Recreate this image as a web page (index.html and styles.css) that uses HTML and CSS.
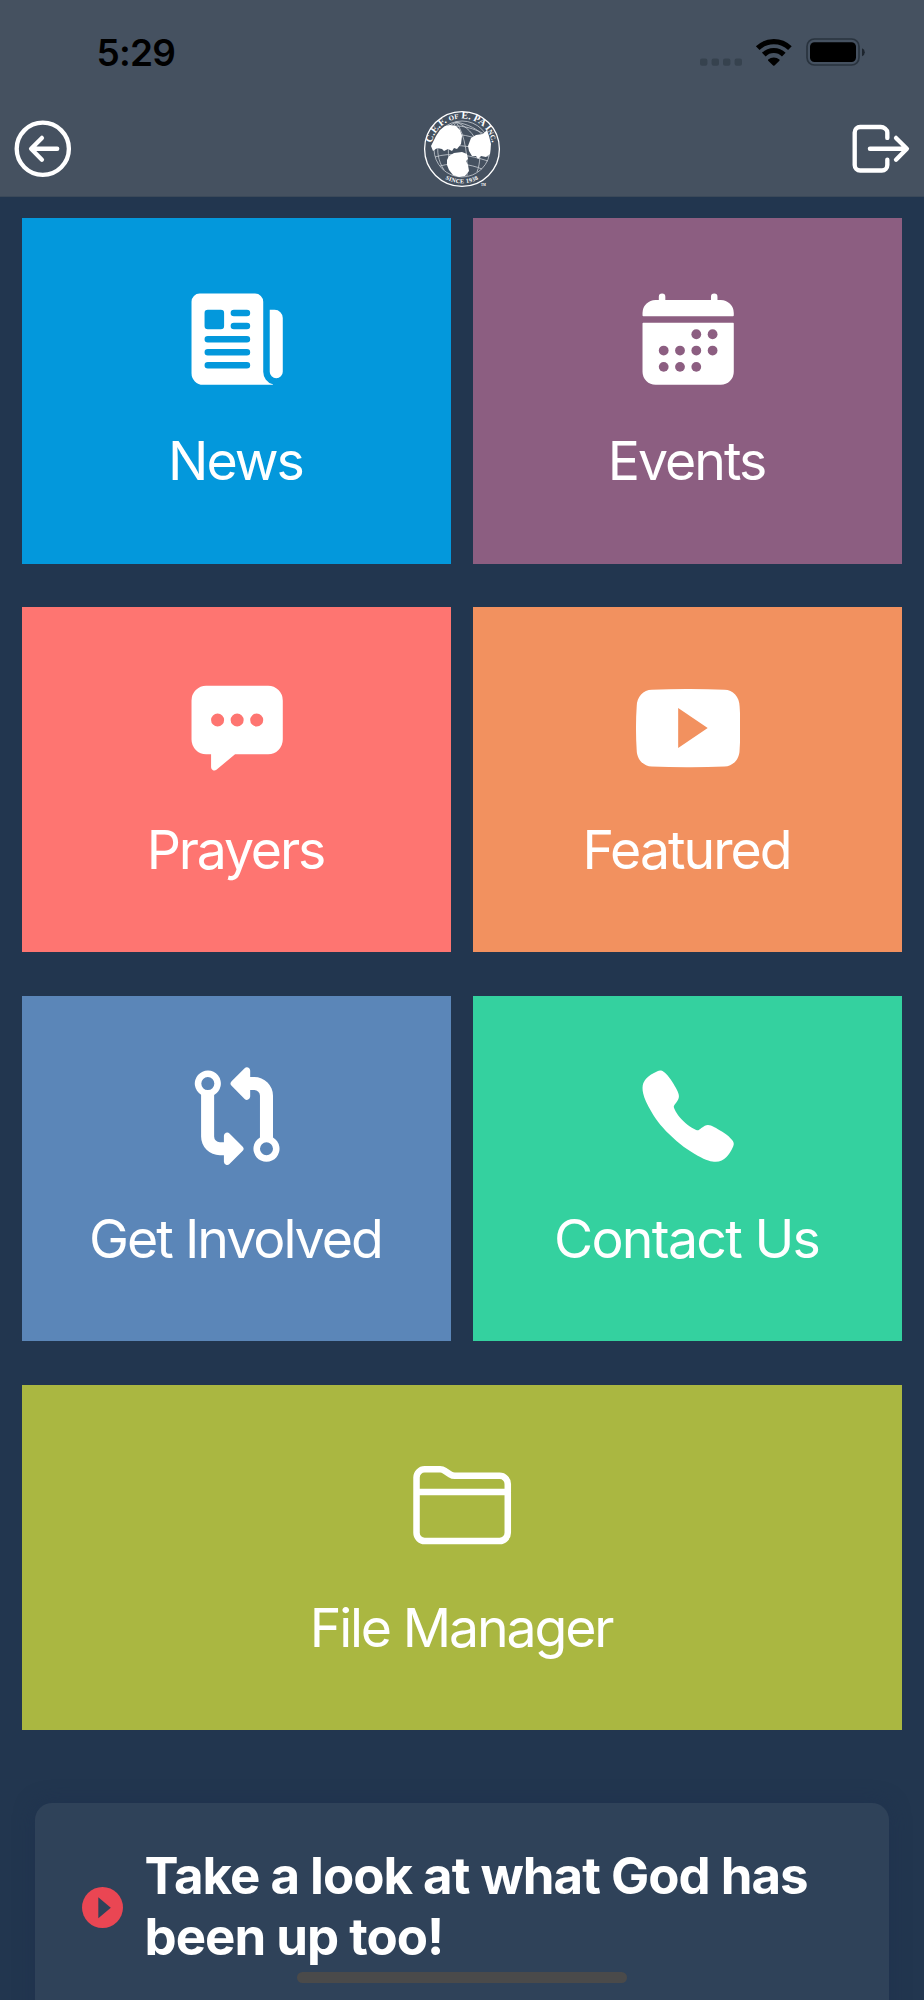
FILE: index.html
```html
<!DOCTYPE html>
<html lang="en">
<head>
<meta charset="utf-8">
<title>Home</title>
<link rel="stylesheet" href="styles.css">
</head>
<body>
<div class="screen">
  <header class="header">
    <div class="status">
      <span class="time">5:29</span>
      <svg class="status-icons" width="164" height="30" viewBox="0 0 164 30">
        <g fill="#36424e"><rect x="0" y="21.4" width="7.4" height="7.4" rx="2"/><rect x="11.6" y="21.4" width="7.4" height="7.4" rx="2"/><rect x="23" y="21.4" width="7.4" height="7.4" rx="2"/><rect x="34.6" y="21.4" width="7.4" height="7.4" rx="2"/></g>
        <g fill="none" stroke="#000" stroke-width="5.2">
          <path d="M57.7 11.2a23 23 0 0 1 32.2 0"/>
          <path d="M63.8 17.6a14.2 14.2 0 0 1 20 0"/>
        </g>
        <path d="M68.2 22.6a8.2 8.2 0 0 1 11.2 0q.5.6 0 1.200l-4.900 4.700q-.7.600-1.400 0l-4.900-4.700q-.5-.6 0-1.200z"/>
        <rect x="107" y="2" width="52" height="26" rx="7.500" fill="none" stroke="#29333e" stroke-width="1.700"/>
        <rect x="110" y="5.300" width="46" height="19.700" rx="4.500"/>
        <path d="M162 11.200q2.800 1.200 2.800 4t-2.800 4z" fill="#1d252e"/>
      </svg>
    </div>
    <nav class="nav">
      <svg class="nav-icon" viewBox="0 0 512 512"><path d="M448 256c0-106-86-192-192-192S64 150 64 256s86 192 192 192 192-86 192-192z"/><path d="M249.400 336L170 256l79.400-80M181 256h181"/></svg>
      <svg class="logo" width="80" height="80" viewBox="-40 -40 80 80">
        <defs>
          <path id="logo-top" d="M-27.500 14A30.800 30.800 0 1 1 27.500 14"/>
          <path id="logo-bottom" d="M-25 23.500A34.300 34.300 0 0 0 25 23.500"/>
        </defs>
        <circle r="37.400" fill="none" stroke="#fff" stroke-width="1.300"/>
        <g fill="none" stroke="#c9ced4" stroke-width=".8">
          <circle r="28"/>
          <path d="M-6-27C-24-18-30 2-18 21M-6-27C-16-10-16 12-7 27M-6-27C4-14 6 12 5 27M-6-27C16-18 22 4 15 23M-6-27C20-22 29-8 26 8M-19-20C-6-26 10-22 24-14M-25-11C-10-18 10-14 27-5M-28 0C-12-6 10-4 28 4M-27 8C-12 3 8 6 26 12M-22 17C-8 13 8 15 20 20"/>
        </g>
        <g fill="#fff">
          <path d="M-26-13l4-6 5-4 5-1 6 1 4 4 2 6-1 8-4 5-3-1-2 3-4-2-4 2-2-2-5-1-4 3-2-5z"/>
          <path d="M9-11l5-3 7-1 4-4 2 6 2 8-1 10-4 3-5-1-3 3-2-3-4 0-3-5-1-5z"/>
          <path d="M-15 11l2-4 5-3 8-1 5 2 1 5-2 2 2 4 1 6-4 5-6 1-6-2-4-5-2-5z"/>
          <text class="logo-top-text"><textPath href="#logo-top" startOffset="50%" text-anchor="middle">C.E.F. of E. PA Inc.</textPath></text>
          <text class="logo-bottom-text"><textPath href="#logo-bottom" startOffset="50%" text-anchor="middle">SINCE 1938</textPath></text>
          <text x="19" y="37" font-size="3">TM</text>
        </g>
      </svg>
      <svg class="nav-icon" viewBox="0 0 512 512"><path d="M304 336v40a40 40 0 0 1-40 40H104a40 40 0 0 1-40-40V136a40 40 0 0 1 40-40h152c22.090 0 48 17.910 48 40v40M368 336l80-80-80-80M176 256h256"/></svg>
    </nav>
  </header>

  <main class="grid">
    <a class="tile news">
      <svg class="icon" viewBox="0 0 512 512" fill-rule="evenodd"><path d="M439.910 112h-23.820a.09.09 0 0 0-.09.09V416a32 32 0 0 0 64 0V152.090A40.090 40.090 0 0 0 439.910 112z"/><path d="M384 416V72a40 40 0 0 0-40-40H72a40 40 0 0 0-40 40v352a56 56 0 0 0 56 56h342.850a1.140 1.140 0 0 0 .3-2.250A64.110 64.110 0 0 1 384 416zM96 128a16 16 0 0 1 16-16h64a16 16 0 0 1 16 16v64a16 16 0 0 1-16 16h-64a16 16 0 0 1-16-16zM304 400H112a16 16 0 0 1 0-32h192a16 16 0 0 1 0 32zm0-64H112a16 16 0 0 1 0-32h192a16 16 0 0 1 0 32zm0-64H112a16 16 0 0 1 0-32h192a16 16 0 0 1 0 32zm0-64h-64a16 16 0 0 1 0-32h64a16 16 0 0 1 0 32zm0-64h-64a16 16 0 0 1 0-32h64a16 16 0 0 1 0 32z"/></svg>
      <span class="label">News</span>
    </a>
    <a class="tile events">
      <svg class="icon" viewBox="0 0 512 512"><path d="M480 128a64 64 0 0 0-64-64h-16V48a16 16 0 0 0-32 0v16H144V48a16 16 0 0 0-32 0v16H96a64 64 0 0 0-64 64v12a4 4 0 0 0 4 4h440a4 4 0 0 0 4-4zM32 416a64 64 0 0 0 64 64h320a64 64 0 0 0 64-64V179a3 3 0 0 0-3-3H35a3 3 0 0 0-3 3z"/><g class="events-dots"><circle cx="296" cy="232" r="24"/><circle cx="376" cy="232" r="24"/><circle cx="136" cy="312" r="24"/><circle cx="216" cy="312" r="24"/><circle cx="296" cy="312" r="24"/><circle cx="376" cy="312" r="24"/><circle cx="136" cy="392" r="24"/><circle cx="216" cy="392" r="24"/><circle cx="296" cy="392" r="24"/></g></svg>
      <span class="label">Events</span>
    </a>
    <a class="tile prayers">
      <svg class="icon" viewBox="0 0 512 512" fill-rule="evenodd"><path d="M408 48H104a72.080 72.080 0 0 0-72 72v192a72.080 72.080 0 0 0 72 72h24v64a16 16 0 0 0 26.250 12.290L245.740 384H408a72.080 72.080 0 0 0 72-72V120a72.080 72.080 0 0 0-72-72zM160 248a32 32 0 1 1 32-32 32 32 0 0 1-32 32zm96 0a32 32 0 1 1 32-32 32 32 0 0 1-32 32zm96 0a32 32 0 1 1 32-32 32 32 0 0 1-32 32z"/></svg>
      <span class="label">Prayers</span>
    </a>
    <a class="tile featured">
      <svg class="icon" viewBox="0 0 512 512" fill-rule="evenodd"><path d="M508.640 148.790c0-45-33.100-81.200-74-81.200C379.240 65 322.740 64 265 64h-18c-57.600 0-114.200 1-169.600 3.600C36.600 67.600 3.500 104 3.500 149 1 184.590-.06 220.190 0 255.790q-.15 53.400 3.400 106.900c0 45 33.100 81.500 73.900 81.500 58.200 2.700 117.900 3.900 178.600 3.800q91.200.3 178.600-3.800c40.900 0 74-36.500 74-81.500 2.400-35.700 3.500-71.300 3.400-107q.34-53.400-3.260-106.900zM207 353.890V157.390l145 98.200z"/></svg>
      <span class="label">Featured</span>
    </a>
    <a class="tile involved">
      <svg class="icon" viewBox="0 0 512 512" fill-rule="evenodd"><path d="M218.310 340.690A16 16 0 0 0 191 352v32h-20a28 28 0 0 1-28-28V152a64 64 0 1 0-64-1.160V356a92.100 92.100 0 0 0 92 92h20v32a16 16 0 0 0 27.310 11.310l64-64a16 16 0 0 0 0-22.620zM112 64a32 32 0 1 1-32 32 32 32 0 0 1 32-32z"/><path d="M432 360.610V156a92.100 92.100 0 0 0-92-92h-20V32a16 16 0 0 0-27.310-11.310l-64 64a16 16 0 0 0 0 22.620l64 64A16 16 0 0 0 320 160v-32h20a28 28 0 0 1 28 28v204.610a64 64 0 1 0 64 0zM400 448a32 32 0 1 1 32-32 32 32 0 0 1-32 32z"/></svg>
      <span class="label">Get Involved</span>
    </a>
    <a class="tile contact">
      <svg class="icon" viewBox="0 0 512 512"><path d="M391 480c-19.520 0-46.940-7.060-88-30-49.930-28-88.550-53.850-138.210-103.380C116.910 298.770 93.610 267.790 61 208.450c-36.840-67-30.560-102.120-23.540-117.130C45.820 73.380 58.160 62.650 74.110 52a176.300 176.300 0 0 1 28.640-15.200c1-.43 1.930-.84 2.760-1.210 4.950-2.230 12.450-5.600 21.950-2 6.340 2.380 12 7.250 20.860 16 18.170 17.920 43 57.830 52.160 77.430 6.150 13.210 10.220 21.930 10.230 31.710 0 11.450-5.760 20.280-12.750 29.810-1.310 1.790-2.610 3.500-3.870 5.160-7.610 10-9.280 12.890-8.180 18.050 2.230 10.370 18.860 41.240 46.190 68.510s57.310 42.850 67.720 45.070c5.380 1.150 8.330-.59 18.650-8.470 1.480-1.130 3-2.300 4.590-3.470 10.660-7.930 19.080-13.540 30.260-13.540h.06c9.730 0 18.060 4.220 31.860 11.180 18 9.080 59.110 33.590 77.140 51.780 8.770 8.840 13.660 14.480 16.050 20.810 3.600 9.530.21 17-2 22-.37.83-.78 1.740-1.210 2.750a176.490 176.490 0 0 1-15.290 28.580c-10.630 15.900-21.400 28.210-39.380 36.580A67.420 67.420 0 0 1 391 480z"/></svg>
      <span class="label">Contact Us</span>
    </a>
    <a class="tile files">
      <svg class="icon outline" viewBox="0 0 512 512"><path d="M440 432H72a40 40 0 0 1-40-40V120a40 40 0 0 1 40-40h75.890a40 40 0 0 1 22.190 6.720l27.840 18.560a40 40 0 0 0 22.190 6.720H440a40 40 0 0 1 40 40v240a40 40 0 0 1-40 40zM32 192h448"/></svg>
      <span class="label">File Manager</span>
    </a>
  </main>

  <section class="card">
    <svg class="play" width="41" height="41" viewBox="0 0 41 41"><circle cx="20.500" cy="20.500" r="20.500" fill="#ea4653"/><path d="M16.300 10.200v21l12.500-10.500z" fill="#2f4259"/></svg>
    <h2 class="card-title">Take a look at what God has<br>been up too!</h2>
  </section>
  <div class="home-bar"></div>
</div>
</body>
</html>
```
FILE: styles.css
```css
* { box-sizing: border-box; }
body { margin: 0; background: #22364f; }
.screen {
  position: relative;
  width: 924px;
  height: 2000px;
  overflow: hidden;
  background: #22364f;
  color: #fff;
  font-family: Inter, "Liberation Sans", sans-serif;
}
.header {
  height: 196.500px;
  background: #455160;
  border-bottom: 1px solid #3b4959;
}
.status {
  display: flex;
  justify-content: space-between;
  height: 109px;
  padding: 37px 60px 0 96.500px;
  color: #000;
}
.time { font-size: 37px; font-weight: 600; line-height: 32px; letter-spacing: -.8px; }
.status-icons { overflow: visible; }
.nav {
  display: flex;
  justify-content: space-between;
  align-items: center;
  height: 80px;
  padding: 0 8.500px 0 8px;
}
.nav-icon, .outline {
  fill: none;
  stroke: #fff;
  stroke-width: 32;
  stroke-linecap: round;
  stroke-linejoin: round;
}
.nav-icon { width: 69.600px; height: 69.600px; }
.logo { overflow: visible; font-family: "Liberation Serif", serif; font-weight: 700; }
.logo-top-text { font-size: 10px; font-variant: small-caps; }
.logo-bottom-text { font-size: 6px; letter-spacing: .3px; }

.grid {
  display: grid;
  grid-template-columns: 1fr 1fr;
  grid-auto-rows: 345.400px;
  gap: 43.400px 21.700px;
  padding: 21.700px 21.700px 0;
}
.tile {
  display: flex;
  flex-direction: column;
  align-items: center;
  padding-top: 68.700px;
}
.icon { display: block; width: 104.300px; height: 104.300px; margin-left: 1.400px; fill: #fff; }
.outline { margin-left: 0; fill: none; }
.label {
  margin: 34px 2px 0 0;
  font-size: 53.600px;
  line-height: 72px;
  letter-spacing: -2px;
  white-space: nowrap;
}
.news { background: #0398dc; }
.events { background: #8c5e81; }
.events-dots { fill: #8c5e81; }
.prayers { background: #fe7571; }
.featured { background: #f2915f; }
.involved { background: #5b86b8; }
.contact { background: #34d19f; }
.files { grid-column: 1 / -1; background: #aab741; }
.contact .label { letter-spacing: -1.700px; }
.prayers .label, .files .label { letter-spacing: -2.150px; }

.card {
  display: flex;
  align-items: flex-start;
  height: 260px;
  margin: 73px 34.700px 0;
  padding: 43px 40px 0 47.500px;
  border-radius: 17px;
  background: #2f4259;
  box-shadow: 0 0 20px rgba(30, 48, 78, .6);
}
.play { flex: none; margin: 41px 21.400px 0 0; }
.card-title { margin: 0; font-size: 51px; font-weight: 700; line-height: 60.700px; letter-spacing: -1px; white-space: nowrap; }
.home-bar {
  position: absolute;
  left: 297.300px;
  top: 1971.700px;
  width: 330px;
  height: 11px;
  border-radius: 6px;
  background: #4a4a4a;
}
```
